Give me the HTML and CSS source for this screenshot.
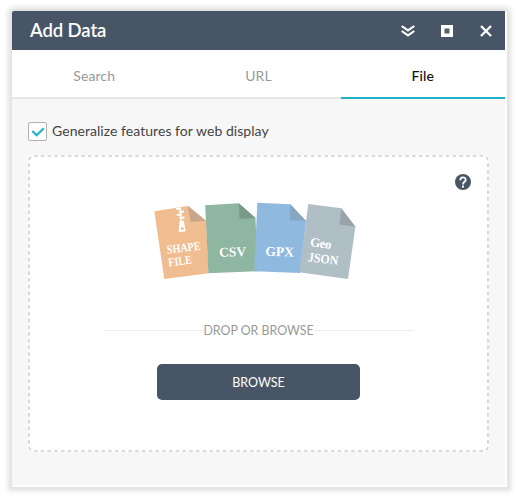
FILE: index.html
```html
<!DOCTYPE html>
<html lang="en">
<head>
    <meta charset="UTF-8">
    <meta name="viewport" content="width=device-width, initial-scale=1.0">
    <title>Add Data</title>
    <link rel="stylesheet" href="styles.css">
</head>
<body>
    <div class="panel">
        <div class="panel-header">
            <h1 class="panel-title">Add Data</h1>
            <div class="panel-actions">
                <svg class="icon" width="16" height="16" viewBox="0 0 16 16">
                    <path d="M1.7 3L8 7.4L14.3 3M1.7 8L8 12.4L14.3 8" fill="none" stroke="#fff" stroke-width="2.1"/>
                </svg>
                <svg class="icon" width="16" height="16" viewBox="0 0 16 16">
                    <rect x="2" y="2" width="12" height="12" fill="#fff"/>
                    <rect x="5.5" y="5.5" width="5" height="5" fill="#596069"/>
                </svg>
                <svg class="icon" width="16" height="16" viewBox="0 0 16 16">
                    <path d="M3 3L13 13M13 3L3 13" fill="none" stroke="#fff" stroke-width="2.3"/>
                </svg>
            </div>
        </div>

        <div class="tabs">
            <div class="tab">Search</div>
            <div class="tab">URL</div>
            <div class="tab active">File</div>
        </div>

        <div class="panel-body">
            <div class="option">
                <span class="checkbox">
                    <svg width="14" height="12" viewBox="0 0 14 12">
                        <path d="M1.3 5L5.6 9.2L12.8 2.2" fill="none" stroke="#21b4cf" stroke-width="2.3"/>
                    </svg>
                </span>
                <span class="option-label">Generalize features for web display</span>
            </div>

            <div class="drop-area">
                <svg class="drop-outline" width="461" height="297">
                    <rect x="1" y="1" width="459" height="295" rx="5" fill="none" stroke="#d0d0d0" stroke-width="1.6" stroke-dasharray="3.7 3.05"/>
                </svg>

                <svg class="help" width="16" height="16" viewBox="0 0 16 16">
                    <circle cx="8" cy="8" r="8" fill="#485566"/>
                    <path d="M5.3 6.2C5.3 2.4 10.7 2.4 10.7 5.9C10.7 7.9 8 7.8 8 10.4" fill="none" stroke="#fff" stroke-width="1.8"/>
                    <rect x="7" y="11.6" width="2" height="2" fill="#fff"/>
                </svg>

                <svg class="file-types" width="210" height="84" viewBox="150 198 210 84">
                    <!-- Shapefile -->
                    <path d="M154.3 211.3L188 206L206 220.7L208.6 273.3L164.3 279Z" fill="#f0bd91"/>
                    <path d="M188 206L206 220.7L190.5 222Z" fill="#c9a58a"/>
                    <path d="M176 209l5-.6M179 212l5-.6M176.8 215l5-.6M179.5 218l5-.6" stroke="#fff" stroke-width="2"/>
                    <path d="M180 207.5L181.3 221" stroke="#fff" stroke-width="1.4"/>
                    <path d="M179.2 221.3L183.7 220.8L185.8 231.3L178.7 232.2Z" fill="#fff"/>
                    <rect x="181" y="227.4" width="2.8" height="2.3" fill="#f0bd91"/>
                    <g transform="translate(167.3 253.7) rotate(-7)">
                        <text class="file-label" font-size="12" textLength="34" lengthAdjust="spacingAndGlyphs">SHAPE</text>
                        <text class="file-label" font-size="12" y="12.8" textLength="23.5" lengthAdjust="spacingAndGlyphs">FILE</text>
                    </g>

                    <!-- CSV -->
                    <path d="M205.2 205.3L238.7 203.3L255.5 218L257.5 271.3L208.4 273.3Z" fill="#8fb6a1"/>
                    <path d="M238.7 203.3L255.5 218L239.7 219Z" fill="#779b87"/>
                    <text class="file-label" font-size="13.5" textLength="27" transform="translate(219.3 256.8) rotate(-2)">CSV</text>

                    <!-- GPX -->
                    <path d="M257.3 202.7L290.3 204.3L306 221L300 273L254.3 271.2Z" fill="#8fb9df"/>
                    <path d="M290.3 204.3L306 221L290 220.3Z" fill="#87a6c0"/>
                    <text class="file-label" font-size="13.5" textLength="28.5" transform="translate(265.3 255.7) rotate(2)">GPX</text>

                    <!-- GeoJSON -->
                    <path d="M308.3 204L341.3 208.3L355.4 226.7L348 279L299.2 272.3Z" fill="#b0bec6"/>
                    <path d="M341.3 208.3L355.4 226.7L339.5 224.5Z" fill="#9aa3aa"/>
                    <g transform="translate(309.7 246.3) rotate(7)">
                        <text class="file-label" font-size="13" textLength="21.5">Geo</text>
                        <text class="file-label" font-size="13" x="-.3" y="15.2" textLength="30.5" lengthAdjust="spacingAndGlyphs">JSON</text>
                    </g>
                </svg>

                <div class="divider">
                    <span class="divider-text">DROP OR BROWSE</span>
                </div>

                <button type="button" class="browse-button">BROWSE</button>
            </div>
        </div>
    </div>
</body>
</html>
```

FILE: styles.css
```css
* {
    box-sizing: border-box;
}
body {
    margin: 0;
    padding: 11px 11px 11px 12px;
    height: 498px;
    background-color: #fff;
    font-family: Lato, "Liberation Sans", sans-serif;
    overflow: hidden;
}
.panel {
    display: flex;
    flex-direction: column;
    width: 495px;
    height: 476px;
    background-color: #f7f7f7;
    border-right: 2px solid #fff;
    border-bottom: 2px solid #fff;
    border-radius: 2px 2px 0 0;
    box-shadow: 0 0 5px 4px rgba(0, 0, 0, 0.12);
}
.panel-header {
    display: flex;
    justify-content: space-between;
    align-items: center;
    height: 39px;
    padding: 0 11px 0 18px;
    background-color: #485566;
    border-radius: 2px 0 0 0;
}
.panel-title {
    margin: 0;
    padding-bottom: 1px;
    color: #fff;
    font-size: 18.5px;
    font-weight: 600;
    letter-spacing: -0.1px;
}
.panel-actions {
    display: flex;
    gap: 23px;
}
.icon {
    display: block;
}
.tabs {
    display: grid;
    grid-template-columns: 1fr 1fr 1fr;
    height: 49px;
    background-color: #fff;
}
.tab {
    height: 49px;
    border-bottom: 2px solid #e5e5e5;
    color: #999;
    font-size: 14px;
    line-height: 52px;
    letter-spacing: 0.1px;
    text-align: center;
}
.tab.active {
    border-color: #1eb0cb;
    color: #111;
    font-weight: 500;
}
.panel-body {
    padding: 23px 16px 0 16px;
}
.option {
    display: flex;
    align-items: center;
    gap: 5px;
    height: 19px;
}
.checkbox {
    display: flex;
    justify-content: center;
    align-items: center;
    width: 19px;
    height: 19px;
    background-color: #fff;
    border: 1px solid #b0b0b0;
    border-radius: 2px;
}
.option-label {
    padding-bottom: 2px;
    color: #444;
    font-size: 14px;
    letter-spacing: 0.05px;
}
.drop-area {
    display: flex;
    flex-direction: column;
    align-items: center;
    position: relative;
    width: 461px;
    height: 297px;
    margin-top: 14px;
    padding-top: 43px;
    background-color: #fff;
    border-radius: 5px;
}
.drop-outline {
    position: absolute;
    top: 0;
    left: 0;
}
.help {
    position: absolute;
    top: 19px;
    right: 18px;
}
.file-types {
    display: block;
    margin-right: 8px;
}
.file-label {
    fill: #fff;
    font-family: "Liberation Serif", serif;
    font-weight: bold;
}
.divider {
    display: flex;
    align-items: center;
    width: 310px;
    margin-top: 39px;
}
.divider::before,
.divider::after {
    content: "";
    flex: 1;
    height: 1px;
    background-color: #eee;
}
.divider-text {
    padding-top: 1px;
    color: #999;
    font-size: 12.4px;
    line-height: 17px;
}
.browse-button {
    width: 203px;
    height: 36px;
    margin-top: 25px;
    padding: 0;
    background-color: #485566;
    border: none;
    border-radius: 5px;
    color: #fff;
    font-family: inherit;
    font-size: 12.5px;
}
```
